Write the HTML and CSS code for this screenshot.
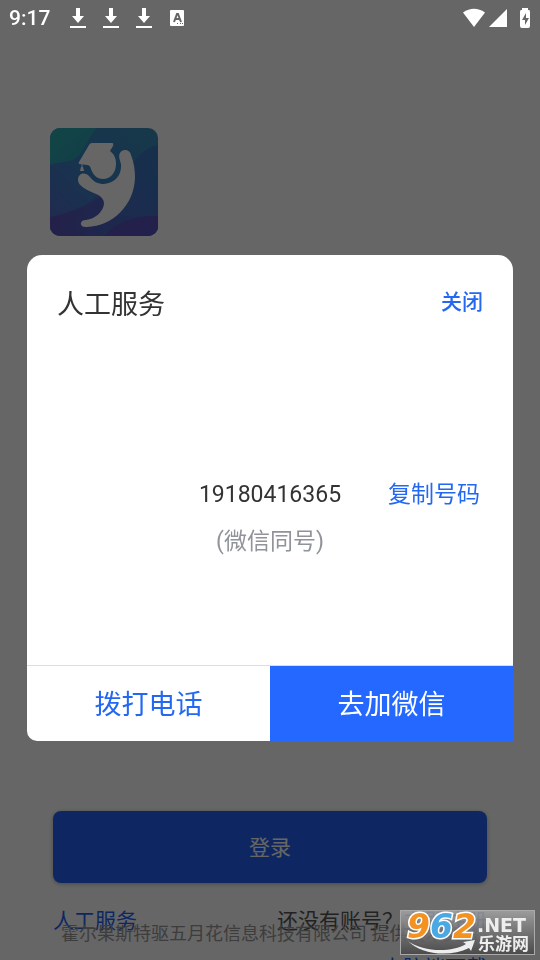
FILE: index.html
```html
<!DOCTYPE html>
<html lang="zh-CN">
<head>
<meta charset="utf-8">
<meta name="viewport" content="width=device-width, initial-scale=1">
<title>登录</title>
<link rel="stylesheet" href="styles.css">
</head>
<body>
<main class="login">
  <svg class="logo" viewBox="0 0 108 108" aria-hidden="true">
    <defs>
      <linearGradient id="sky" x1="1" y1="0" x2="0" y2="1"><stop offset="0" stop-color="#3b8cb8"/><stop offset=".5" stop-color="#3a83c4"/><stop offset="1" stop-color="#5566c8"/></linearGradient>
      <linearGradient id="band" x1="1" y1="0" x2="0" y2="1"><stop offset="0" stop-color="#3777c0"/><stop offset="1" stop-color="#5666c8"/></linearGradient>
      <linearGradient id="teal" x1="0" y1="0" x2="1" y2="1"><stop offset="0" stop-color="#30adb2"/><stop offset="1" stop-color="#2a9db0"/></linearGradient>
      <linearGradient id="base" x1="0" y1="0" x2="1" y2="0"><stop offset="0" stop-color="#5952b8"/><stop offset="1" stop-color="#4070c6"/></linearGradient>
    </defs>
    <path fill="url(#sky)" d="M0 0h108v108H0z"/>
    <path fill="url(#band)" d="M108 17C87 21 85 39 67 51 49 63 43 79 0 90v18h108z"/>
    <path fill="url(#base)" d="M0 89c20-4 35-10 50-20 15 5 3 27 58 17v22H0z"/>
    <path fill="url(#teal)" d="M0 0h47C36 10 35 29 19 33 11 35 6 34 0 37z"/>
    <path fill="#5750bd" d="M54 108c12-14 31-21 54-20v20z"/>
    <path fill="#fff" d="M42 15h20q2 0 1 3l-3 5c4 3 6 7 6 13 0 9-6 15-13 15-6 0-10-4-12-10q-1-4-4-4l-7-1q-2 0-1-2l10-17q1-2 3-2z"/>
    <path stroke="#fff" stroke-width="1" d="M32 35v4"/><path fill="#fff" d="M31 39h2l1 4h-4z"/>
    <path fill="#fff" d="M28 52c0-7 7-9 12-3 4 5 8 7 14 7 11-1 18-9 17-20-1-4-3-8-1-11 3-5 10-3 11 2 3 8 4 15 4 23-1 27-22 48-48 49-8 1-8-7-1-7 9-1 17-8 18-16 0-5-3-8-8-10-9-4-18-8-18-14z"/>
  </svg>
  <button class="submit" type="button">登录</button>
  <nav class="links">
    <a class="service" href="#">人工服务</a>
    <span>还没有账号？<a href="#">立即注册</a></span>
  </nav>
  <p class="company">霍尔果斯特驱五月花信息科技有限公司 提供技术支持</p>
  <a class="download" href="#">电脑端下载</a>
</main>

<div class="scrim">
  <header class="status">
    <time>9:17</time>
    <svg class="arrow" viewBox="0 0 16 22"><path d="M6 1h4v8h4l-6 7-6-7h4zM0 19h16v2H0z"/></svg>
    <svg class="arrow" viewBox="0 0 16 22"><path d="M6 1h4v8h4l-6 7-6-7h4zM0 19h16v2H0z"/></svg>
    <svg class="arrow" viewBox="0 0 16 22"><path d="M6 1h4v8h4l-6 7-6-7h4zM0 19h16v2H0z"/></svg>
    <svg class="letter" viewBox="0 0 16 18"><rect x="1" y="1" width="14" height="16" rx="1"/><path fill="none" stroke="#666" stroke-width="2" d="M5 13l3-8h1l3 8M6 10h4"/><path fill="#666" d="M8 14h1v1H8zM11 14h1v1h-1zM13 14h1v1h-1z"/></svg>
    <svg class="wifi" viewBox="0 0 24 20"><path d="M1 4.500Q12-3 23 4.500L12 19z"/></svg>
    <svg class="signal" viewBox="0 0 18 18"><path d="M18 0v18H0z"/></svg>
    <svg class="battery" viewBox="0 0 12 20"><path d="M3 0h6v2h1q1 0 1 2v14q0 2-2 2H3q-2 0-2-2V4q0-2 1-2h1z"/><path fill="#666" d="M7 5l-4 7h3v5l4-7H7z"/></svg>
  </header>
  <div class="stage">
    <section class="dialog" role="dialog" aria-labelledby="dialog-title">
      <header class="head">
        <h1 id="dialog-title">人工服务</h1>
        <button class="close" type="button">关闭</button>
      </header>
      <div class="contact">
        <span class="number">19180416365</span>
        <button class="copy" type="button">复制号码</button>
        <span class="note">(微信同号)</span>
      </div>
      <footer class="actions">
        <button class="call" type="button">拨打电话</button>
        <button class="add" type="button">去加微信</button>
      </footer>
    </section>
  </div>
</div>

<aside class="mark" aria-label="962.NET 乐游网">
  <svg viewBox="0 0 135 45">
    <defs><linearGradient id="plate" x1="0" y1="0" x2="0" y2="1"><stop offset="0" stop-color="#aaa"/><stop offset="1" stop-color="#444"/></linearGradient></defs>
    <rect x=".5" y=".5" width="134" height="44" fill="url(#plate)" fill-opacity=".8" stroke="#aaa"/>
    <path fill="#eee" d="M8 31c15 11 43 12 58 3l-3-2 12-2-4 11-2-3C49 48 20 44 8 31z"/>
    <g class="digits"><text class="orange" x="7" y="28">9</text><text class="blue" x="30" y="28">6</text><text class="orange" x="53" y="28">2</text></g>
    <text class="net" x="77" y="22">.NET</text>
    <text class="site" x="78" y="40">乐游网</text>
  </svg>
</aside>
</body>
</html>
```
FILE: styles.css
```css
* { box-sizing: border-box; }

body {
  margin: 0;
  min-height: 100vh;
  overflow: hidden;
  background: #fff;
  color: #555;
  font-family: Roboto, "Noto Sans CJK SC", sans-serif;
}

button {
  border: 0;
  padding: 0;
  background: none;
  color: #2468f2;
  font: inherit;
}

a { color: #2563f5; text-decoration: none; }

.login {
  display: flex;
  flex-direction: column;
  height: 100vh;
  padding: 128px 53px 0;
}

.logo {
  width: 108px;
  height: 108px;
  margin-left: -3px;
  flex: none;
  border-radius: 10px;
}

.submit {
  flex: none;
  height: 72px;
  margin-top: 575px;
  padding-bottom: 2px;
  border-radius: 8px;
  background: #2563f5;
  color: #fff;
  font-size: 21px;
  box-shadow: 0 1px 4px rgba(0, 0, 0, .3);
}

.links {
  display: flex;
  flex: none;
  justify-content: space-between;
  margin-top: 22px;
  font-size: 21px;
  line-height: 32px;
}

.company {
  flex: none;
  margin: -15px 8px 0;
  color: #999;
  font-size: 18px;
  line-height: 24px;
  white-space: nowrap;
}

.download {
  flex: none;
  align-self: flex-end;
  margin-top: 6px;
  font-size: 21px;
  line-height: 32px;
}

.scrim {
  position: fixed;
  inset: 0;
  display: flex;
  flex-direction: column;
  background: rgba(0, 0, 0, .6);
}

.status {
  display: flex;
  align-items: center;
  flex: none;
  height: 36px;
  padding: 0 9px;
  color: #fff;
  font-size: 21px;
  font-weight: 500;
}

.status svg { fill: #fff; }
.status time { width: 61px; }
.arrow { width: 16px; height: 22px; margin-right: 17px; }
.letter { width: 16px; height: 18px; }
.wifi { width: 24px; height: 20px; margin: 0 3px 0 auto; }
.signal { width: 18px; height: 18px; margin-right: 12px; }
.battery { width: 12px; height: 20px; }

.stage {
  display: flex;
  flex: 1;
  align-items: center;
  justify-content: center;
}

.dialog {
  display: flex;
  flex-direction: column;
  width: 90%;
  aspect-ratio: 1;
  border-radius: 15px 15px 0 10px;
  background: #fff;
  color: #333;
  overflow: hidden;
}

.head {
  display: flex;
  justify-content: space-between;
  padding: 30px 30px 0;
}

.head h1 {
  margin: 0;
  font-size: 27px;
  font-weight: 400;
  line-height: 40px;
}

.close {
  height: 30px;
  font-size: 21px;
  font-weight: 500;
}

.contact {
  display: grid;
  flex: 1;
  grid-template-columns: 1fr auto 1fr;
  align-content: center;
  align-items: center;
  row-gap: 12px;
  padding: 45px 33px 0;
  font-size: 23px;
  line-height: 35px;
}

.number { grid-column: 2; }
.copy { justify-self: end; }
.note { grid-column: 2; color: #909399; text-align: center; }

.actions {
  display: grid;
  grid-template-columns: 1fr 1fr;
  height: 76px;
  border-top: 1px solid #ddd;
  font-size: 27px;
}

.actions button { padding-bottom: 2px; }
.add { background: #2468ff; color: #fff; }

.mark {
  position: fixed;
  right: 5px;
  bottom: 5px;
  width: 135px;
  height: 45px;
}

.mark svg { display: block; }

.digits {
  font: italic 700 33px "DejaVu Sans", sans-serif;
  stroke: #fff;
  stroke-width: 3px;
  paint-order: stroke;
}

.orange { fill: #f39221; }
.blue { fill: #4aa9e4; }
.net { fill: #eee; font: 700 19px "DejaVu Sans", sans-serif; }
.site { fill: #eee; font: 700 17px "Noto Sans CJK SC", sans-serif; }
```
